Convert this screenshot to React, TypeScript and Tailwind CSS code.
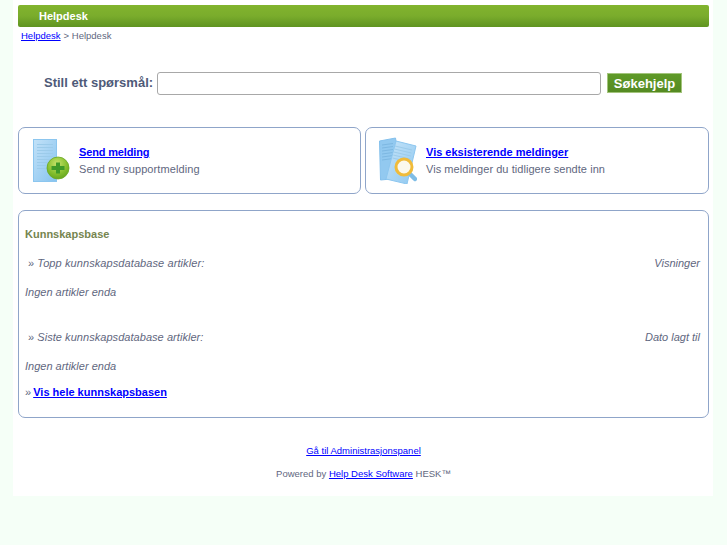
import type { ReactNode } from "react";

function Panel({ children }: { children: ReactNode }) {
  return (
    <div className="h-[67px] flex items-center rounded-[7px] border border-[#8fa5c9] bg-white pl-[14px]">
      {children}
    </div>
  );
}

function NewTicketIcon() {
  return (
    <svg width="37" height="44" viewBox="0 0 37 44" className="shrink-0">
      <defs>
        <linearGradient id="sheetA" x1="0" y1="0" x2="1" y2="1">
          <stop offset="0" stopColor="#c3e2f8" />
          <stop offset="1" stopColor="#86c3ef" />
        </linearGradient>
        <radialGradient id="ballA" cx="0.45" cy="0.3" r="0.8">
          <stop offset="0" stopColor="#c6e36a" />
          <stop offset="0.6" stopColor="#82bd2c" />
          <stop offset="1" stopColor="#5c9c1c" />
        </radialGradient>
      </defs>
      <rect x="0.5" y="0.5" width="23" height="42" fill="url(#sheetA)" stroke="#8cc6ef" />
      {[5, 8, 11, 14, 17, 20, 23, 26, 29].map((y) => (
        <line key={y} x1="4" x2="20" y1={y + 0.5} y2={y + 0.5} stroke="#9ccbea" />
      ))}
      <circle cx="25" cy="29" r="11" fill="url(#ballA)" stroke="#6aa820" strokeWidth="0.8" />
      <path d="M23 23.5h4v3.5h4.5v4h-4.5v3.5h-4v-3.5h-4.5v-4h4.5z" fill="#3f9a28" />
    </svg>
  );
}

function ViewTicketsIcon() {
  return (
    <svg width="38" height="47" viewBox="0 0 38 47" className="shrink-0 -ml-px">
      <defs>
        <linearGradient id="sheetB" x1="0" y1="0" x2="1" y2="1">
          <stop offset="0" stopColor="#c6e4f9" />
          <stop offset="1" stopColor="#8fc8f0" />
        </linearGradient>
      </defs>
      <path d="M0.5 4l16-3 6 40-21 2z" fill="#92c9f0" stroke="#84c0ec" />
      {[8, 11, 14, 17, 20, 23].map((y) => (
        <line key={y} x1="3" x2="14" y1={y} y2={y - 1.5} stroke="#7db8e2" />
      ))}
      <path d="M17 4l20 5-9 38-21-5z" fill="url(#sheetB)" stroke="#8cc6ef" />
      {[9, 12, 15, 18, 21].map((y) => (
        <line key={y} x1={16 - (y - 9) * 0.2} x2={33 - (y - 9) * 0.2} y1={y} y2={y + 4} stroke="#9ccbea" />
      ))}
      <path d="M30 36l6 6" stroke="#7fbde6" strokeWidth="4.5" strokeLinecap="round" />
      <circle cx="25" cy="30" r="8" fill="#fbf8ec" stroke="#f0bb3a" strokeWidth="3" />
    </svg>
  );
}

export default function App() {
  return (
    <div className="min-h-[545px] bg-[#f5fff7] font-['Liberation_Sans',Arial,sans-serif] text-[11px] text-[#5f6780]">
      <div className="ml-[13px] w-[700px] h-[496px] bg-white pl-[5px] pr-[4px] pt-[5px]">
        <div className="h-[22px] flex items-center rounded-[2px] bg-gradient-to-b from-[#82b42e] via-[#7aac2c] to-[#5f9420] pl-[21px] text-[11px] font-bold text-white">
          Helpdesk
        </div>
        <div className="h-[18px] pl-[3px] flex items-center text-[9.5px]">
          <a href="#" className="text-[#0000ff] underline">Helpdesk</a>
          <span className="ml-[3px]">&gt; Helpdesk</span>
        </div>

        <div className="mt-[27px] h-[22px] flex items-center pl-[26px]">
          <span className="text-[13px] font-bold text-[#4e5a78] mr-[4px]">Still ett spørsmål:</span>
          <input className="w-[444px] h-[23px] rounded-[3px] border border-[#a8a8a8] bg-white" />
          <button className="ml-[6px] w-[75px] h-[20px] border border-[#a3c47c] bg-gradient-to-b from-[#5f9a28] to-[#558a22] text-[13px] font-bold text-white">
            Søkehjelp
          </button>
        </div>

        <div className="mt-[33px] grid grid-cols-[343px_344px] gap-[4px]">
          <Panel>
            <NewTicketIcon />
            <div className="ml-[9px]">
              <a href="#" className="block font-bold text-[#0000ff] underline tracking-[-0.15px]">Send melding</a>
              <div className="tracking-[0.09px]">Send ny supportmelding</div>
            </div>
          </Panel>
          <Panel>
            <ViewTicketsIcon />
            <div className="ml-[9px]">
              <a href="#" className="block font-bold text-[#0000ff] underline">Vis eksisterende meldinger</a>
              <div className="tracking-[0.05px]">Vis meldinger du tidligere sendte inn</div>
            </div>
          </Panel>
        </div>

        <div className="mt-[16px] h-[208px] rounded-[7px] border border-[#8fa5c9] pl-[6px] pr-[8px]">
          <div className="mt-[15px] font-bold text-[#76854f]">Kunnskapsbase</div>
          <div className="mt-[12px] flex justify-between pl-[3px] italic">
            <span className="tracking-[0.09px]"><span className="not-italic">»</span> Topp kunnskapsdatabase artikler:</span>
            <span>Visninger</span>
          </div>
          <div className="mt-[13px] italic">Ingen artikler enda</div>
          <div className="mt-[28px] flex justify-between pl-[3px] italic">
            <span className="tracking-[0.05px]"><span className="not-italic">»</span> Siste kunnskapsdatabase artikler:</span>
            <span>Dato lagt til</span>
          </div>
          <div className="mt-[13px] italic">Ingen artikler enda</div>
          <div className="mt-[9px]">
            » <a href="#" className="-ml-px font-bold text-[#0000ff] underline">Vis hele kunnskapsbasen</a>
          </div>
        </div>

        <div className="mt-[26px] text-center text-[9.5px]">
          <a href="#" className="text-[#0000ff] underline">Gå til Administrasjonspanel</a>
        </div>
        <div className="mt-[9px] text-center text-[9.5px]">
          Powered by <a href="#" className="text-[#0000ff] underline">Help Desk Software</a> HESK™
        </div>
      </div>
    </div>
  );
}
